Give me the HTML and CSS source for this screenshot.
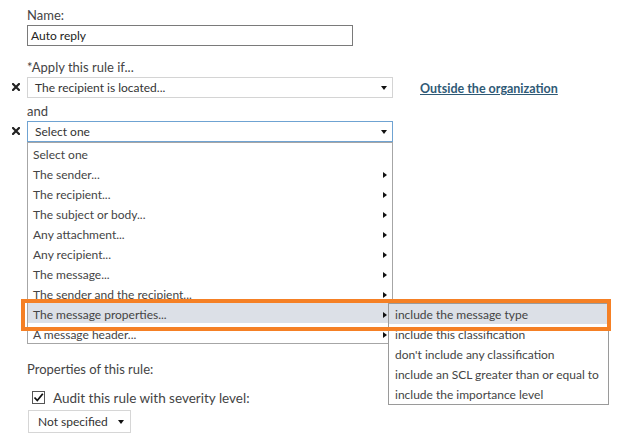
FILE: index.html
```html
<!DOCTYPE html>
<html>
<head>
<meta charset="utf-8">
<link rel="stylesheet" href="styles.css">
</head>
<body>
<div class="form">
  <div class="label name-label">Name:</div>
  <div class="textbox">Auto reply</div>

  <div class="label apply-label">*Apply this rule if...</div>
  <div class="cond-row first-cond">
    <span class="remove"><svg width="8" height="8" viewBox="0 0 8 8"><path d="M1 1L7 7M7 1L1 7" stroke="#222" stroke-width="2.2" stroke-linecap="square"/></svg></span>
    <div class="select sel-light"><span>The recipient is located...</span><i class="down"></i></div>
    <a class="link" href="#">Outside the organization</a>
  </div>

  <div class="label and-label">and</div>
  <div class="cond-row">
    <span class="remove"><svg width="8" height="8" viewBox="0 0 8 8"><path d="M1 1L7 7M7 1L1 7" stroke="#222" stroke-width="2.2" stroke-linecap="square"/></svg></span>
    <div class="select sel-focus"><span>Select one</span><i class="down"></i></div>
  </div>

  <ul class="list">
    <li>Select one</li>
    <li>The sender...<i class="right"></i></li>
    <li>The recipient...<i class="right"></i></li>
    <li>The subject or body...<i class="right"></i></li>
    <li>Any attachment...<i class="right"></i></li>
    <li>Any recipient...<i class="right"></i></li>
    <li>The message...<i class="right"></i></li>
    <li>The sender and the recipient...<i class="right"></i></li>
    <li class="hl">The message properties...<i class="right"></i></li>
    <li>A message header...<i class="right"></i></li>
  </ul>

  <div class="label props-label">Properties of this rule:</div>
  <div class="check-row">
    <span class="checkbox"><svg width="11" height="11" viewBox="0 0 11 11"><path d="M1.5 5.5L4.3 8.5L9.8 1.8" fill="none" stroke="#111" stroke-width="1.8"/></svg></span>
    <span class="check-text">Audit this rule with severity level:</span>
  </div>
  <div class="select small-select"><span>Not specified</span><i class="down"></i></div>
</div>

<ul class="submenu">
  <li class="hl">include the message type</li>
  <li>include this classification</li>
  <li>don't include any classification</li>
  <li>include an SCL greater than or equal to</li>
  <li>include the importance level</li>
</ul>
<div class="callout"></div>
</body>
</html>
```

FILE: styles.css
```css
html, body {
  margin: 0;
  padding: 0;
  background: #fff;
}
body {
  font-family: "Lato", "Open Sans", "Liberation Sans", sans-serif;
  font-size: 13px;
  color: #444;
  width: 617px;
  height: 441px;
  overflow: hidden;
  position: relative;
}
.form {
  padding-left: 27px;
  padding-top: 6px;
}
.label {
  line-height: 18px;
  height: 18px;
}
.name-label { margin-bottom: 1px; }
.textbox {
  box-sizing: border-box;
  width: 326px;
  height: 21px;
  border: 1px solid #7a7a7a;
  padding: 1px 3px 0;
  line-height: 18px;
  font-size: 12px;
  color: #222;
}
.apply-label { margin-top: 12px; }
.cond-row {
  display: flex;
  align-items: flex-start;
  position: relative;
  margin-top: 1px;
}
.remove {
  position: absolute;
  left: -15px;
  top: 6px;
  width: 8px;
  height: 8px;
  display: flex;
}
.select {
  box-sizing: border-box;
  width: 366px;
  height: 21px;
  border: 1px solid #d4d4d4;
  display: flex;
  align-items: center;
  justify-content: space-between;
  padding: 1px 5px 0 7px;
  color: #333;
  font-size: 12px;
  line-height: 18px;
}
.sel-focus { border-color: #6fa3d2; }
.down {
  width: 0;
  height: 0;
  border-left: 3.5px solid transparent;
  border-right: 3.5px solid transparent;
  border-top: 4px solid #111;
}
.link {
  margin-left: 27px;
  margin-top: 3px;
  color: #2f5a76;
  font-weight: bold;
  text-decoration: underline;
  font-size: 12.5px;
  line-height: 18px;
}
.and-label { margin-top: 4px; }
.list {
  list-style: none;
  margin: 0;
  padding: 0;
  box-sizing: border-box;
  width: 366px;
  border: 1px solid #a6a6a6;
}
.list li {
  box-sizing: border-box;
  height: 20px;
  line-height: 16px;
  padding: 4px 5px 0 5px;
  display: flex;
  justify-content: space-between;
  align-items: center;
  font-size: 12px;
  color: #444;
}
.list li.hl { background: #dce0e7; }
.right {
  width: 0;
  height: 0;
  border-top: 3.5px solid transparent;
  border-bottom: 3.5px solid transparent;
  border-left: 4px solid #111;
}
.props-label { margin-top: 16px; }
.check-row {
  display: flex;
  align-items: center;
  margin-top: 12px;
  padding-left: 5px;
  height: 15px;
}
.checkbox {
  box-sizing: border-box;
  width: 13px;
  height: 13px;
  border: 1px solid #555;
  display: flex;
  align-items: center;
  justify-content: center;
  background: #fff;
}
.check-text {
  margin-left: 8px;
  font-size: 13.5px;
}
.small-select {
  width: 103px;
  height: 23px;
  margin-top: 5px;
  margin-left: 1px;
  border-color: #d6d6d6;
  padding: 1px 6px 0 9px;
}
.submenu {
  position: absolute;
  left: 388px;
  top: 303px;
  width: 221px;
  box-sizing: border-box;
  margin: 0;
  padding: 0;
  list-style: none;
  border: 1px solid #9a9a9a;
  background: #fff;
}
.submenu li {
  box-sizing: border-box;
  height: 20px;
  line-height: 18px;
  padding: 2px 0 0 6px;
  font-size: 12px;
  color: #444;
  white-space: nowrap;
}
.submenu li.hl { background: #dce0e7; }
.callout {
  position: absolute;
  left: 21px;
  top: 299px;
  width: 590px;
  height: 32px;
  box-sizing: border-box;
  border: 4px solid #f58025;
}
```
